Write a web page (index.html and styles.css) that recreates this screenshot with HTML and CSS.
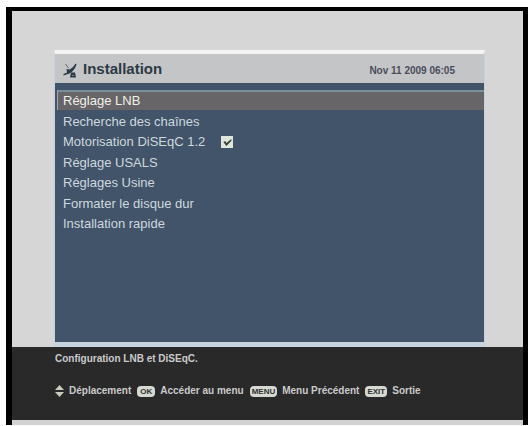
FILE: index.html
```html
<!DOCTYPE html>
<html lang="fr">
  <head>
    <meta charset="UTF-8" />
    <meta name="viewport" content="width=device-width, initial-scale=1.0" />
    <title>Installation</title>
    <link rel="stylesheet" href="styles.css">
  </head>
  <body>
    <div class="screen">
      <main class="panel">
        <header class="panel-header">
          <svg class="dish" viewBox="0 0 14 15" aria-hidden="true">
            <path d="M2.500 1L5.500 5" stroke="#5b666e" stroke-width="1" fill="none" />
            <path d="M12.500 0.500L13.500 1.500C12 6 9 10 5 11L0.500 12.500L0.500 11L4 9.500L3.500 6L6.500 6.500C9.500 5 11 3 12.500 0.500Z" fill="#2b3a44" />
            <path d="M8 9.500L12 9.500L13 14.500H7Z" fill="#2b3a44" />
            <path d="M9 12.500H11" stroke="#7b8288" />
          </svg>
          <h1>Installation</h1>
          <time datetime="2009-11-11T06:05">Nov 11 2009 06:05</time>
        </header>

        <ul class="menu">
          <li class="active"><button type="button">Réglage LNB</button></li>
          <li><button type="button">Recherche des chaînes</button></li>
          <li>
            <label for="motor">Motorisation DiSEqC 1.2</label>
            <input type="checkbox" id="motor" checked />
          </li>
          <li><button type="button">Réglage USALS</button></li>
          <li><button type="button">Réglages Usine</button></li>
          <li><button type="button">Formater le disque dur</button></li>
          <li><button type="button">Installation rapide</button></li>
        </ul>
      </main>

      <footer class="help">
        <p>Configuration LNB et DiSEqC.</p>
        <div class="keys">
          <span class="key-item">
            <svg class="arrows" viewBox="0 0 9 12" aria-hidden="true">
              <path d="M0 5L4.500 0L9 5Z" fill="#c9ccb8" />
              <path d="M0 7L4.500 12L9 7Z" fill="#c9ccb8" />
            </svg>
            Déplacement
          </span>
          <span class="key-item"><kbd>OK</kbd>Accéder au menu</span>
          <span class="key-item"><kbd>MENU</kbd>Menu Précédent</span>
          <span class="key-item"><kbd>EXIT</kbd>Sortie</span>
        </div>
      </footer>
    </div>
  </body>
</html>
```

FILE: styles.css
```css
* {
  box-sizing: border-box;
}

body {
  margin: 7px 0 0 6px;
  background-color: #fff;
  font-family: "Liberation Sans", Arial, sans-serif;
}

.screen {
  background-color: #d6d6d6;
  border: solid #000;
  border-width: 4px 5px 0 6px;
  padding-top: 39px;
}

.panel {
  margin: 0 38px 0 42px;
  border: 1px solid #c3d2de;
  border-top: 4px solid #f4f4f4;
  border-bottom: 5px solid #c8d4dd;
  background-color: #415469;
}

.panel-header {
  display: flex;
  align-items: center;
  height: 29px;
  padding: 0 29px 0 8px;
  background-color: #c4c5c6;
  color: #2b3a44;
}

.dish {
  width: 14px;
  height: 15px;
  margin: 4px 6px 0 0;
}

h1 {
  flex: 1;
  margin: 0;
  font-size: 15px;
  line-height: 20px;
}

time {
  padding-top: 4px;
  font-size: 10px;
  font-weight: bold;
  color: #4a4d5c;
}

.menu {
  min-height: 259px;
  margin: 0;
  padding: 7px 0 0 2px;
  list-style: none;
}

.menu li {
  display: flex;
  align-items: center;
  height: 20px;
  padding: 2px 0 0 6px;
  font-size: 13px;
  line-height: 18px;
  color: #ced8de;
}

.menu li:nth-child(odd) {
  margin-bottom: 1px;
}

.menu li.active {
  background-color: #676567;
  border-top: 2px solid #7d8e9b;
  border-left: 1px solid #a0a8ac;
  padding: 0 0 0 5px;
  color: #f0f0ea;
}

.menu button {
  flex: 1;
  padding: 0;
  border: none;
  background: none;
  color: inherit;
  font: inherit;
  text-align: left;
  cursor: pointer;
}

.menu input {
  appearance: none;
  width: 12px;
  height: 12px;
  margin: 0 0 0 16px;
  background-color: #dfe6dc;
}

.menu input:checked::before {
  content: "";
  display: block;
  height: 12px;
  background-color: #37443f;
  clip-path: polygon(2px 6px, 4px 5px, 5px 7px, 10px 3px, 10px 5px, 5px 10px);
}

.help {
  height: 78px;
  padding: 5px 42px 0 43px;
  background-color: #292929;
  border-bottom: 5px solid #d2d2d2;
  box-shadow: 0 2px #555;
  font-size: 10px;
  font-weight: bold;
  line-height: 14px;
  color: #c9c9cc;
}

.help p {
  margin: 0 0 18px;
}

.keys {
  display: flex;
  gap: 6px;
  white-space: nowrap;
}

.key-item {
  display: flex;
  align-items: center;
  gap: 5px;
}

.arrows {
  width: 9px;
  height: 12px;
}

kbd {
  min-width: 18px;
  padding: 0 2px;
  border-radius: 4px;
  background-color: #d5d9d2;
  color: #30332f;
  font-family: inherit;
  font-size: 8px;
  line-height: 11px;
  text-align: center;
}
```
